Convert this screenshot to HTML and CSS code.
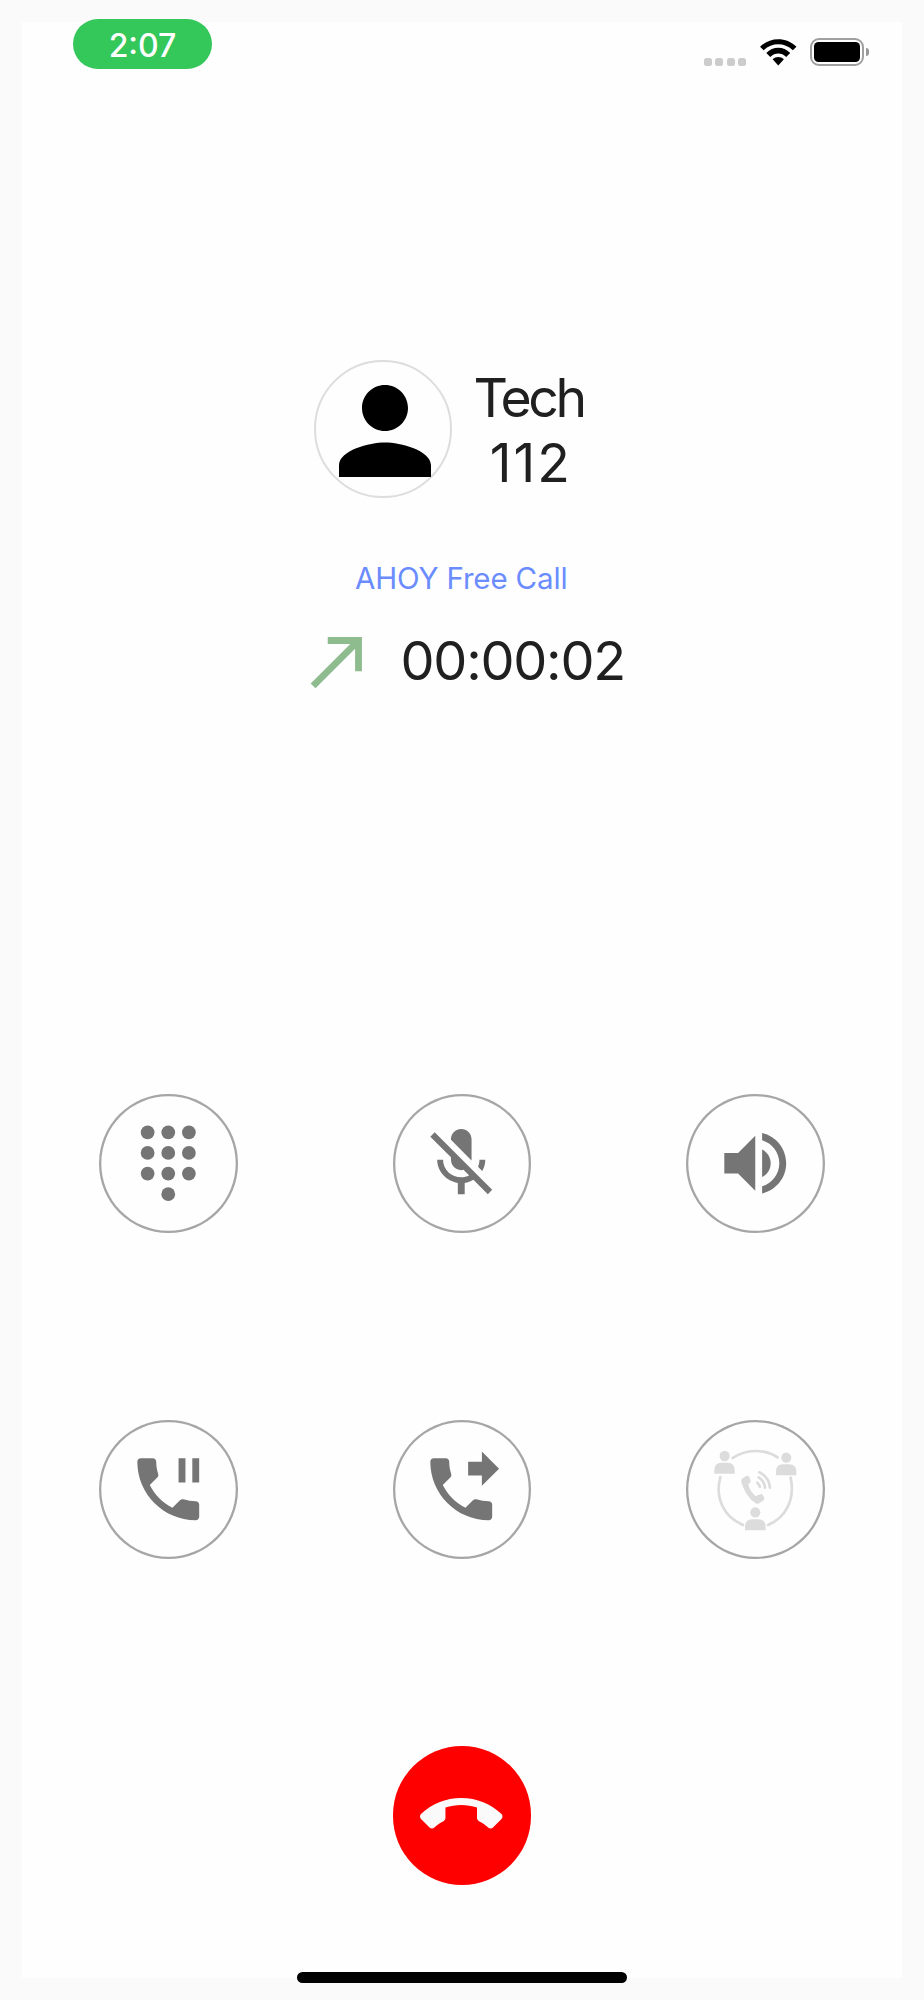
FILE: index.html
```html
<!DOCTYPE html>
<html lang="en">
<head>
<meta charset="utf-8">
<title>Call</title>
<link rel="stylesheet" href="styles.css">
</head>
<body>
<main class="screen">
  <header class="status">
    <div class="clock">2:07</div>
    <div class="indicators">
      <div class="signal"><i></i><i></i><i></i><i></i></div>
      <svg class="wifi" viewBox="0 0 110 81">
        <path d="M0 23C31-7 79-7 110 23L99 34C73 10 37 10 11 34Z"/>
        <path d="M19 42C39 21 71 21 91 42L79 54C65 40 45 40 31 54Z"/>
        <path d="M38 61C48 52 62 52 72 61L55 80Z"/>
      </svg>
      <div class="battery"><div class="battery-case"><div class="battery-level"></div></div><div class="battery-tip"></div></div>
    </div>
  </header>

  <section class="contact">
    <div class="avatar">
      <svg viewBox="0 0 24 24"><path d="M12 12c2.21 0 4-1.79 4-4s-1.79-4-4-4-4 1.79-4 4 1.79 4 4 4zm0 2c-2.67 0-8 1.34-8 4v2h16v-2c0-2.66-5.33-4-8-4z"/></svg>
    </div>
    <div class="who"><span class="name">Tech</span><span class="number">112</span></div>
  </section>

  <p class="plan">AHOY Free Call</p>

  <section class="timer">
    <svg viewBox="0 0 24 24"><path d="M9 5v2h6.59L4 18.59 5.41 20 17 8.41V15h2V5z"/></svg>
    <span class="elapsed">00:00:02</span>
  </section>

  <section class="controls">
    <button class="control" aria-label="Keypad">
      <svg viewBox="0 0 24 24"><circle cx="6" cy="3" r="2"/><circle cx="12" cy="3" r="2"/><circle cx="18" cy="3" r="2"/><circle cx="6" cy="9" r="2"/><circle cx="12" cy="9" r="2"/><circle cx="18" cy="9" r="2"/><circle cx="6" cy="15" r="2"/><circle cx="12" cy="15" r="2"/><circle cx="18" cy="15" r="2"/><circle cx="12" cy="21" r="2"/></svg>
    </button>
    <button class="control" aria-label="Mute">
      <svg viewBox="0 0 24 24"><path d="M19 11h-1.7c0 .74-.16 1.43-.43 2.05l1.23 1.23c.56-.98.9-2.09.9-3.28zm-4.02.17c0-.06.02-.11.02-.17V5c0-1.66-1.34-3-3-3S9 3.340 9 5v.18l5.980 5.990zM4.270 3L3 4.270l6.010 6.010V11c0 1.660 1.330 3 2.990 3 .22 0 .44-.03.65-.08l1.660 1.660c-.71.33-1.500.52-2.310.52-2.760 0-5.300-2.100-5.300-5.100H5c0 3.410 2.720 6.230 6 6.720V21h2v-3.280c.91-.13 1.770-.45 2.540-.9L19.730 21 21 19.730 4.270 3z"/></svg>
    </button>
    <button class="control" aria-label="Speaker">
      <svg viewBox="0 0 24 24"><path d="M3 9v6h4l5 5V4L7 9H3zm13.500 3c0-1.770-1.020-3.290-2.500-4.030v8.050c1.480-.73 2.500-2.250 2.500-4.020zM14 3.230v2.060c2.890.86 5 3.540 5 6.710s-2.110 5.850-5 6.710v2.060c4.010-.91 7-4.490 7-8.770s-2.990-7.860-7-8.770z"/></svg>
    </button>
    <button class="control" aria-label="Hold">
      <svg viewBox="0 0 24 24"><path d="M17 3h-2v7h2V3zm3 12.500c-1.250 0-2.450-.2-3.570-.57-.35-.11-.74-.03-1.020.24l-2.200 2.200c-2.830-1.440-5.150-3.750-6.590-6.590l2.200-2.210c.28-.26.36-.65.25-1C8.700 6.450 8.500 5.250 8.500 4c0-.55-.45-1-1-1H4c-.55 0-1 .45-1 1 0 9.390 7.610 17 17 17 .55 0 1-.45 1-1v-3.500c0-.55-.45-1-1-1zM19 3v7h2V3h-2z"/></svg>
    </button>
    <button class="control" aria-label="Transfer">
      <svg viewBox="0 0 24 24"><path d="M18 11l5-5-5-5v3h-4v4h4v3zm2 4.500c-1.250 0-2.450-.2-3.570-.57-.35-.11-.74-.03-1.020.24l-2.200 2.200c-2.830-1.440-5.150-3.750-6.590-6.590l2.200-2.210c.28-.26.36-.65.25-1C8.700 6.450 8.500 5.250 8.500 4c0-.55-.45-1-1-1H4c-.55 0-1 .45-1 1 0 9.390 7.610 17 17 17 .55 0 1-.45 1-1v-3.500c0-.55-.45-1-1-1z"/></svg>
    </button>
    <button class="control conference" aria-label="Conference">
      <svg viewBox="101 100 280 280">
        <g class="line">
          <path d="M172 145A124 124 0 0 1 307 143"/>
          <path d="M346 204C360 269 332 324 278 346"/>
          <path d="M203 346C145 322 118 264 135 202"/>
          <path d="M252 188Q281 202 284 234M250 203Q267 213 269 234M246 219Q253 225 254 232"/>
        </g>
        <g>
          <ellipse cx="148" cy="139" rx="15" ry="15.500"/><path d="M117 192V182Q117 159 138 159H157Q178 159 178 182V192Z"/>
          <ellipse cx="333" cy="144" rx="15" ry="15.500"/><path d="M302 197V187Q302 164 323 164H342Q363 164 363 187V197Z"/>
          <ellipse cx="240" cy="308" rx="15" ry="15.500"/><path d="M209 362V352Q209 329 230 329H250Q271 329 271 352V362Z"/>
          <path d="M202 206L214 198Q219 196 222 202L226 214Q227 219 219 223Q221 241 241 260L255 254Q260 252 263 257L267 266Q268 270 263 273L251 281Q247 284 241 281Q212 263 198 218Q197 210 202 206Z"/>
        </g>
      </svg>
    </button>
  </section>

  <button class="hangup" aria-label="End call">
    <svg viewBox="0 0 24 24"><path d="M12 9c-1.600 0-3.150.25-4.600.72v3.100c0 .39-.23.74-.56.9-.98.49-1.870 1.120-2.660 1.850-.18.18-.43.28-.7.28-.28 0-.53-.11-.71-.29L.29 13.080c-.18-.17-.29-.42-.29-.7 0-.28.11-.53.29-.71C3.340 8.780 7.460 7 12 7s8.660 1.780 11.710 4.670c.18.18.29.43.29.71 0 .28-.11.53-.29.71l-2.480 2.480c-.18.18-.43.29-.71.29-.27 0-.52-.11-.7-.28-.79-.74-1.690-1.360-2.670-1.850-.33-.16-.56-.5-.56-.9v-3.100C15.150 9.250 13.600 9 12 9z"/></svg>
  </button>

  <div class="home"></div>
</main>
</body>
</html>
```

FILE: styles.css
```css
* { box-sizing: border-box; }
body {
  margin: 0;
  padding: 22px;
  height: 2000px;
  overflow: hidden;
  background: #fafafa;
  color: #202020;
  font-family: Inter, "Liberation Sans", sans-serif;
}
svg { display: block; flex: none; }
button { padding: 0; background: none; font: inherit; }
.screen {
  display: flex;
  flex-direction: column;
  align-items: center;
  height: 1956px;
  background: #fefefe;
}
.status {
  display: flex;
  justify-content: space-between;
  align-self: stretch;
  height: 50px;
  margin: -2.600px 33px 0 51px;
}
.clock {
  width: 139px;
  border-radius: 25px;
  background: #34c759;
  color: #fff;
  font-size: 32px;
  font-weight: 450;
  line-height: 53px;
  text-align: center;
}
.indicators { display: flex; align-items: flex-start; }
.signal { display: flex; gap: 3.500px; margin: 39px 14px 0 0; }
.signal i { width: 8px; height: 8px; border-radius: 2.500px; background: #ccc; }
.wifi { width: 36.500px; height: 27px; margin: 20px 13.500px 0 0; }
.battery { display: flex; align-items: center; gap: 2px; margin-top: 19px; }
.battery-case { width: 54px; height: 28px; padding: 2px; border: 2px solid #a0a0a0; border-radius: 9px; }
.battery-level { height: 20px; border-radius: 4.500px; background: #000; }
.battery-tip { width: 3px; height: 8px; border-radius: 0 4px 4px 0; background: #999; }

.contact { display: flex; align-self: flex-start; gap: 22px; height: 138px; margin: 290.600px 0 0 292.400px; }
.avatar {
  width: 138px;
  height: 138px;
  border: 2px solid #ddd;
  border-radius: 50%;
}
.avatar svg { width: 138px; height: 138px; }
.who {
  display: flex;
  flex-direction: column;
  align-items: center;
  width: 110px;
  padding-top: 4.500px;
  font-size: 53.500px;
  line-height: 65.400px;
}
.name { margin-right: 1.500px; letter-spacing: -3.300px; }
.number { margin-left: 3px; letter-spacing: 2px; }
.plan { margin: 60.500px 1.500px 0 0; color: #6a8cff; font-size: 29.500px; line-height: 38px; letter-spacing: -0.150px; }
.timer { display: flex; align-self: flex-start; align-items: center; gap: 22px; height: 82px; margin: 23px 0 0 274.500px; }
.timer svg { width: 82px; height: 82px; fill: #8fbc8f; }
.elapsed { font-size: 54px; line-height: 82px; letter-spacing: -1.250px; }

.controls {
  display: grid;
  grid-template-columns: repeat(3, 1fr);
  grid-auto-rows: 138.500px;
  row-gap: 187.500px;
  justify-items: center;
  align-self: stretch;
  margin: 392.500px -0.500px 0;
}
.control, .hangup {
  display: flex;
  align-items: center;
  justify-content: center;
  width: 138.500px;
  height: 138.500px;
  padding-right: 1px;
  border: 0;
  border-radius: 50%;
}
.control { box-shadow: inset 0 0 0 2.300px #a6a6a6; }
.control svg { width: 82.500px; height: 82.500px; fill: #757575; }
.control.conference svg { width: 93.300px; height: 93.300px; fill: #dcdcdc; }
.conference .line { fill: none; stroke: #dcdcdc; stroke-width: 8; stroke-linecap: round; }
.hangup { flex: none; margin-top: 187.500px; background: #f00; }
.hangup svg { width: 82.500px; height: 82.500px; fill: #fafafa; }
.home { flex: none; width: 330px; height: 11px; margin-top: 87px; border-radius: 6px; background: #000; }
```
